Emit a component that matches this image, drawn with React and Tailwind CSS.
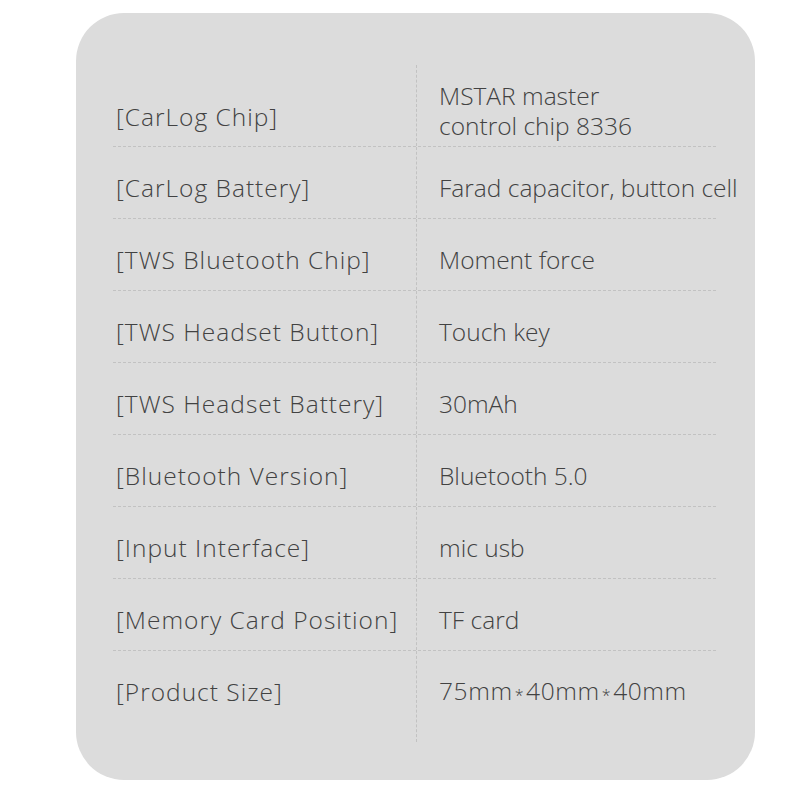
import React from 'react';

const specs = [
  { label: '[CarLog Battery]', value: 'Farad capacitor, button cell' },
  { label: '[TWS Bluetooth Chip]', value: 'Moment force' },
  { label: '[TWS Headset Button]', value: 'Touch key' },
  { label: '[TWS Headset Battery]', value: '30mAh' },
  { label: '[Bluetooth Version]', value: 'Bluetooth 5.0' },
  { label: '[Input Interface]', value: 'mic usb' },
  { label: '[Memory Card Position]', value: 'TF card' },
];

function Row({ label, children, height, leftPad, rightPad, last = false }) {
  return (
    <div
      className={`flex w-[603px] ${height} ${last ? '' : 'border-b border-dashed border-[#c2c2c2]'}`}
    >
      <div className="w-[304px] shrink-0 border-r border-dashed border-[#c2c2c2]">
        <div className={`h-[72px] pl-[3px] flex items-center tracking-[1px] ${leftPad}`}>{label}</div>
      </div>
      <div className={`h-[72px] pl-[22px] flex items-center whitespace-nowrap ${rightPad}`}>
        {children}
      </div>
    </div>
  );
}

function Times() {
  return <span className="inline-block text-[16px] translate-y-[1px] px-[2px]">*</span>;
}

export default function App() {
  return (
    <div className="w-[800px] h-[800px] bg-white pt-[13px] pl-[76px]">
      <div
        className="w-[679px] h-[767px] rounded-[48px] bg-[#dcdcdc] pl-[37px] pt-[52px] text-[24.5px] leading-[30px] font-light text-[#424242]"
        style={{ fontFamily: '"Open Sans", "Noto Sans", sans-serif' }}
      >
        {/* first row has a two-line value */}
        <Row label="[CarLog Chip]" height="h-[82px]" leftPad="pt-[22px] h-[82px]" rightPad="pt-[10px] h-[82px]">
          <div>
            <div>MSTAR master</div>
            <div>control chip 8336</div>
          </div>
        </Row>

        {specs.map((s) => (
          <Row key={s.label} label={s.label} height="h-[72px]" leftPad="pt-[10px]" rightPad="pt-[10px]">
            {s.value}
          </Row>
        ))}

        <Row label="[Product Size]" height="h-[91px]" leftPad="pt-[10px]" rightPad="pt-[10px]" last>
          <span className="tracking-[0.6px]">
            75mm<Times />40mm<Times />40mm
          </span>
        </Row>
      </div>
    </div>
  );
}
